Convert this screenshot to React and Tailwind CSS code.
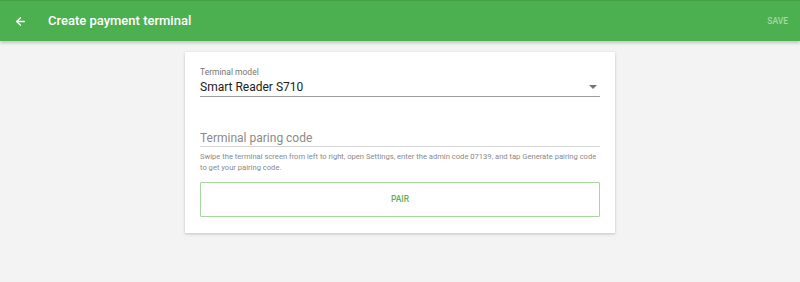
import React from 'react'
import { ArrowLeft } from 'lucide-react'

export default function App() {
  return (
    <div className="min-h-[282px] bg-[#f3f3f3]" style={{ fontFamily: 'Roboto, "Liberation Sans", sans-serif' }}>
      {/* App bar */}
      <div className="h-[41px] bg-[#4caf50] border-t border-[#43a047] flex items-center pl-[14px] pr-[12px] shadow-[0_2px_3px_rgba(0,0,0,0.2)]">
        <ArrowLeft size={13} strokeWidth={2.5} className="text-white" />
        <span className="ml-[21px] text-white text-[13px] font-medium">Create payment terminal</span>
        <span className="ml-auto text-[8.5px] font-medium text-white/50">SAVE</span>
      </div>

      {/* Card */}
      <div className="mx-auto mt-[11px] w-[430px] bg-white shadow-[0_1px_3px_rgba(0,0,0,0.2)] px-[15px] pt-[15px] pb-[16px]">
        <div className="text-[8.5px] text-[#757575] leading-[10px]">Terminal model</div>
        <div className="mt-[2px] flex items-center border-b border-[#9e9e9e] h-[15px] pb-[2px] box-content">
          <span className="text-[12px] text-[#212121]">Smart Reader S710</span>
          <svg className="ml-auto mr-[3px]" width="8" height="4" viewBox="0 0 8 4">
            <path d="M0 0 L8 0 L4 4 Z" fill="#757575" />
          </svg>
        </div>

        <div className="mt-[33px] border-b border-[#d6d6d6] h-[14px] pb-[2px] box-content leading-[14px]">
          <span className="text-[12px] text-[#8a8a8a]">Terminal paring code</span>
        </div>
        <p className="mt-[4px] text-[7.6px] leading-[11px] text-[#8a8a8a]">
          Swipe the terminal screen from left to right, open Settings, enter the admin code 07139, and tap Generate pairing code to get your pairing code.
        </p>

        <button className="mt-[9px] w-full h-[35px] border border-[#a8d5a0] rounded-[1px] text-[8.5px] font-medium text-[#6cab52]">
          PAIR
        </button>
      </div>
    </div>
  )
}
